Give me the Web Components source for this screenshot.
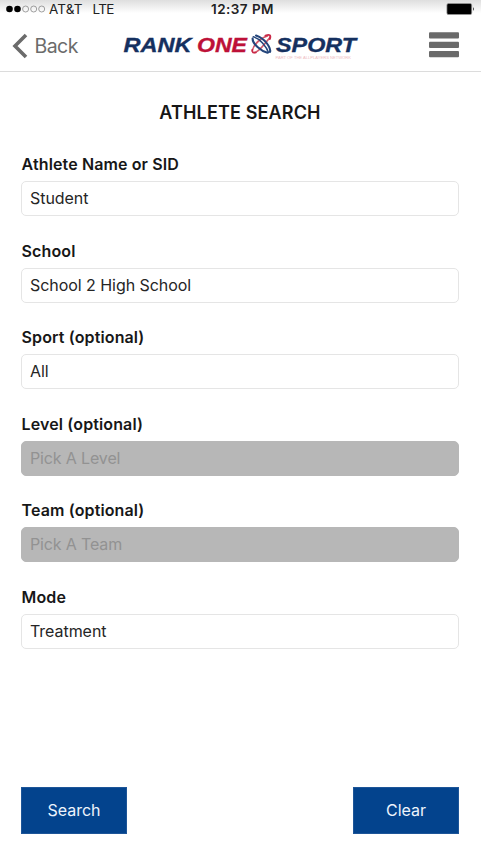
<!DOCTYPE html>
<html lang="en">
<head>
<meta charset="utf-8">
<title>Athlete Search</title>
<style>
body{margin:0;background:#fff;font-family:Inter,"Liberation Sans",sans-serif;color:#161616}
</style>
</head>
<body>
<athlete-app></athlete-app>
<script>
function define(name, html, setup){
  customElements.define(name, class extends HTMLElement{
    constructor(){
      super();
      this.attachShadow({mode:'open'}).innerHTML = html;
    }
    connectedCallback(){ if(setup) setup(this, this.shadowRoot); }
  });
}

define('status-bar', `
<style>
:host{display:grid;grid-template-columns:1fr auto 1fr;align-items:center;height:18px;box-sizing:border-box;padding:0 5px 0 6px;background:linear-gradient(#dedede,#fff 13px);font-size:13.5px;line-height:18px;color:#222}
.l{display:flex;align-items:center;height:18px;white-space:pre}
.c{font-weight:600;color:#222;letter-spacing:.45px;padding-left:3px}
.r{justify-self:end;display:flex}
svg{display:block}
.carrier{margin-left:3px;letter-spacing:.1px}
.net{margin-left:10px;letter-spacing:-.6px}
</style>
<div class="l">
<svg width="40" height="8" viewBox="0 0 40 8"><circle cx="3.5" cy="4" r="3.3"/><circle cx="11.5" cy="4" r="3.3"/><g fill="none" stroke="#888" stroke-width=".8"><circle cx="19.6" cy="4" r="3"/><circle cx="27.7" cy="4" r="3"/><circle cx="35.7" cy="4" r="3"/></g></svg>
<span class="carrier">AT&amp;T</span><span class="net">LTE</span></div>
<span class="c">12:37 PM</span>
<div class="r"><svg width="30" height="12" viewBox="0 0 30 12"><rect x=".9" y=".5" width="24.8" height="11" rx="1.5" fill="#000" stroke="#999" stroke-width=".7"/><path d="M27 4q1.7 2 0 4z" fill="#111"/></svg></div>`);

define('brand-logo', `
<style>:host{display:block}svg{display:block}text{font-family:"Liberation Sans",Inter,sans-serif;font-weight:700;font-style:italic;font-size:21px}.w{stroke-width:.35}</style>
<svg width="240" height="32" viewBox="120 32 240 32">
<text class="w" x="123.5" y="52" textLength="68" lengthAdjust="spacingAndGlyphs" fill="#15305f" stroke="#15305f">RANK</text>
<text class="w" x="197" y="52" textLength="50" lengthAdjust="spacingAndGlyphs" fill="#bd1138" stroke="#bd1138">ONE</text>
<g fill="none" stroke-linecap="round">
<path d="M252.3 51Q253 46 258 41.5T267.5 36" stroke="#d35a6b" stroke-width="1.7"/>
<path d="M253 52.5Q257 52.5 261.5 47.5T269.5 38" stroke="#d35a6b" stroke-width="1.7"/>
<path d="M265.5 35.6Q271.8 33.2 269.8 39" stroke="#ca2948" stroke-width="2"/>
<path d="M252.3 49.5Q251.5 53.5 256 52.5" stroke="#ca2948" stroke-width="1.6"/>
<path d="M256 35.5Q263 38 267 43.5T270 52" stroke="#24457b" stroke-width="2.1"/>
<path d="M253.3 36.8Q258 38 262.5 43T268.5 52.5" stroke="#24457b" stroke-width="1.5"/>
<path d="M252.6 38.5Q252.5 42.5 257.5 47T267.5 52.8" stroke="#24457b" stroke-width="2.1"/>
</g>
<text class="w" x="276" y="52" textLength="80" lengthAdjust="spacingAndGlyphs" fill="#15305f" stroke="#15305f">SPORT</text>
<text x="275.5" y="59.4" textLength="75.5" lengthAdjust="spacingAndGlyphs" fill="#efbcc2" style="font-size:3px;font-weight:500;font-style:normal">PART OF THE ALLPLAYERS NETWORK</text>
</svg>`);

define('nav-bar', `
<style>
:host{display:grid;grid-template-columns:120px 240px 1fr;height:54px;box-sizing:border-box;border-bottom:1px solid #dcdcdc}
.back{display:flex;align-items:center;height:56px;padding-left:12px;color:#6b6b6b;font-size:19.5px;letter-spacing:-.55px}
.back svg{margin-right:6.5px}
brand-logo{margin-top:14px}
.menu{justify-self:end;padding:14px 22px 0 0}
svg{display:block}
</style>
<div class="back"><svg width="16" height="26" viewBox="0 0 16 26"><path d="M14 2L3 13L14 24" fill="none" stroke="#6b6b6b" stroke-width="3.6"/></svg><span>Back</span></div>
<brand-logo></brand-logo>
<div class="menu"><svg width="30" height="26" viewBox="0 0 30 26" fill="#6a6a6a"><rect y=".3" width="30" height="6.2" rx="1"/><rect y="9.7" width="30" height="6.2" rx="1"/><rect y="19" width="30" height="6.2" rx="1"/></svg></div>`);

define('form-field', `
<style>
:host{display:block;height:86.5px}
.label{font-size:16px;font-weight:600;line-height:20px;height:27px;color:#171717;padding-left:.6px;letter-spacing:.12px}
.box{box-sizing:border-box;height:35px;border:1px solid #e5e5e5;border-radius:5px;padding:0 8px;line-height:33px;font-size:16px;color:#252525;letter-spacing:-.05px}
:host([disabled]) .box{background:#b7b7b7;border-color:#b7b7b7;color:#929292;letter-spacing:-.14px}
</style>
<div class="label"><span></span></div><div class="box"><slot></slot></div>`,
(el, root) => {
  root.querySelector('.label span').textContent = el.getAttribute('label');
});

define('action-button', `
<style>:host{display:flex;align-items:center;justify-content:center;box-sizing:border-box;width:106px;height:47px;padding-bottom:1px;background:#03438d;color:#eef4fc;font-size:16px;letter-spacing:-.05px;border:1px solid #1d5598}</style>
<slot></slot>`);

define('athlete-app', `
<style>
:host{display:flex;flex-direction:column;height:855px;overflow:hidden}
h1{margin:30px 0 0;font-size:18px;line-height:22px;font-weight:600;text-align:center;padding-right:1px;letter-spacing:.14px}
.form{padding:30px 22px 0 21px}
footer{display:flex;justify-content:space-between;margin-top:auto;padding:0 22px 21px 21px}
</style>
<status-bar></status-bar>
<nav-bar></nav-bar>
<h1>ATHLETE SEARCH</h1>
<div class="form">
<form-field label="Athlete Name or SID">Student</form-field>
<form-field label="School">School 2 High School</form-field>
<form-field label="Sport (optional)">All</form-field>
<form-field label="Level (optional)" disabled>Pick A Level</form-field>
<form-field label="Team (optional)" disabled>Pick A Team</form-field>
<form-field label="Mode">Treatment</form-field>
</div>
<footer><action-button>Search</action-button><action-button>Clear</action-button></footer>`);
</script>
</body>
</html>
